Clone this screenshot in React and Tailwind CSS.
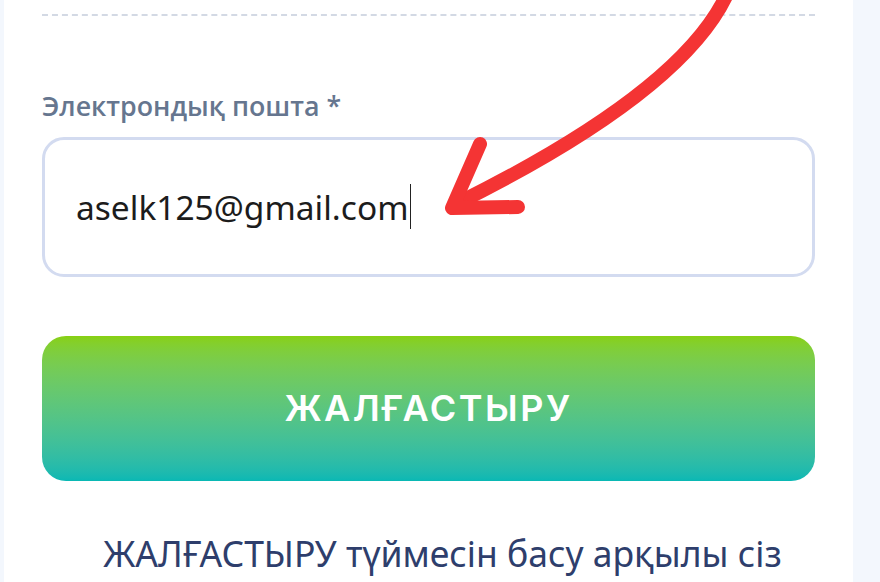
import React from 'react';

const Arrow = () => (
    <svg className="pointer-events-none absolute inset-0" width="880" height="582" viewBox="0 0 880 582" fill="none">
        <g stroke="#f43434" strokeLinecap="round" strokeLinejoin="round">
            <path d="M728 -8 C700 55 615 125 458 203" strokeWidth="14" />
            <path d="M480 144 L452 208 L518 207" strokeWidth="14" />
        </g>
    </svg>
);

const App = () => {
    return (
        <div className="relative h-[582px] w-[880px] overflow-hidden bg-[#f3f7fd]">
            <div className="ml-[4px] h-full w-[849px] bg-white px-[38px]" style={{ fontFamily: '"Open Sans", "Noto Sans", sans-serif' }}>
                <div className="pt-[14px]">
                    <div className="border-t-2 border-dashed border-[#d3d9e4]" />
                </div>

                <div className="mt-[77px] text-[26.8px] font-semibold leading-none text-[#66768f]">
                    Электрондық пошта *
                </div>

                <div className="mt-[17px] flex h-[140px] items-center rounded-[22px] border-[3px] border-[#d3dbf0] px-[31px]">
                    <span className="text-[33.5px] text-[#1c1c1c] font-['Noto_Sans',sans-serif]">aselk125@gmail.com</span>
                    <span className="ml-[1px] h-[45px] w-[1.5px] bg-[#222]" />
                </div>

                <button className="mt-[59px] flex h-[145px] w-full items-center justify-center rounded-[24px] bg-gradient-to-b from-[#88d011] to-[#08b8b4] text-[36px] font-semibold tracking-[2.5px] text-white font-['Inter',sans-serif]">
                    ЖАЛҒАСТЫРУ
                </button>

                <p className="mt-[55px] pl-[28px] text-center text-[35.5px] leading-none text-[#2e3e6c] font-['Noto_Sans',sans-serif]">
                    ЖАЛҒАСТЫРУ түймесін басу арқылы сіз
                </p>
            </div>
            <Arrow />
        </div>
    );
};

export default App;
